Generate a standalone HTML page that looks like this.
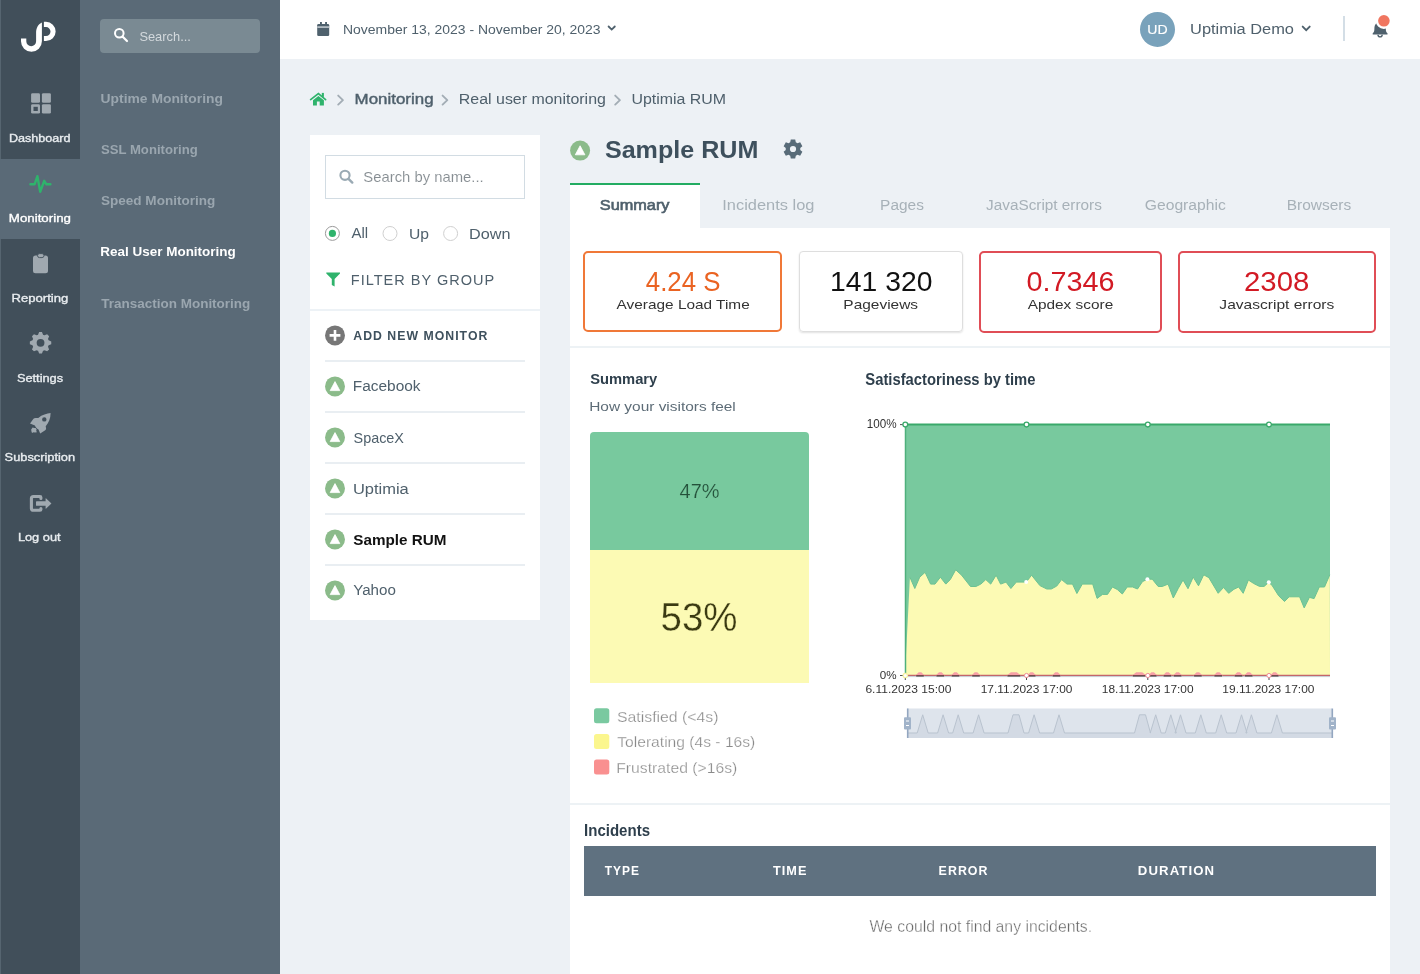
<!DOCTYPE html>
<html><head><meta charset="utf-8"><title>Uptimia RUM</title>
<style>
html,body{margin:0;padding:0;}
body{width:1420px;height:974px;overflow:hidden;position:relative;background:#edf1f5;font-family:"Liberation Sans",sans-serif;}
.a{position:absolute;}
svg{position:absolute;left:0;top:0;will-change:transform;}
text{font-family:"Liberation Sans",sans-serif;white-space:pre;}
</style></head><body>
<div class="a" style="left:0;top:0;width:80px;height:974px;background:#414f5a;"></div>
<div class="a" style="left:0;top:0;width:1px;height:974px;background:#566570;"></div>
<div class="a" style="left:0;top:159px;width:80px;height:80px;background:#5a6a77;"></div>
<div class="a" style="left:80px;top:0;width:200px;height:974px;background:#5a6a77;"></div>
<div class="a" style="left:100px;top:19px;width:160px;height:34px;background:#7a8a93;border-radius:4px;"></div>
<div class="a" style="left:280px;top:0;width:1140px;height:59px;background:#fff;"></div>
<div class="a" style="left:310px;top:135px;width:230px;height:485px;background:#fff;"></div>
<div class="a" style="left:325px;top:155px;width:198px;height:42px;border:1px solid #d2dce3;background:#fff;"></div>
<div class="a" style="left:310px;top:309px;width:230px;height:2px;background:#edf2f6;"></div>
<div class="a" style="left:325px;top:360px;width:200px;height:2px;background:#e9eef2;"></div>
<div class="a" style="left:325px;top:411px;width:200px;height:2px;background:#e9eef2;"></div>
<div class="a" style="left:325px;top:462px;width:200px;height:2px;background:#e9eef2;"></div>
<div class="a" style="left:325px;top:513px;width:200px;height:2px;background:#e9eef2;"></div>
<div class="a" style="left:325px;top:564px;width:200px;height:2px;background:#e9eef2;"></div>
<div class="a" style="left:570px;top:183px;width:130px;height:45px;background:#fff;border-top:2px solid #23ac62;box-sizing:border-box;"></div>
<div class="a" style="left:570px;top:228px;width:820px;height:746px;background:#fff;"></div>
<div class="a" style="left:583px;top:251px;width:199px;height:81px;border:2px solid #f07838;border-radius:5px;box-sizing:border-box;"></div>
<div class="a" style="left:799.3px;top:251.3px;width:163.5px;height:80.7px;border:1px solid #dedede;border-radius:4px;box-sizing:border-box;box-shadow:0 1px 2px rgba(0,0,0,0.12);"></div>
<div class="a" style="left:979px;top:251px;width:182.5px;height:81.5px;border:2px solid #e04d56;border-radius:5px;box-sizing:border-box;"></div>
<div class="a" style="left:1178px;top:251px;width:198px;height:81.5px;border:2px solid #e04d56;border-radius:5px;box-sizing:border-box;"></div>
<div class="a" style="left:570px;top:346px;width:820px;height:2px;background:#edf2f5;"></div>
<div class="a" style="left:590px;top:432px;width:218.5px;height:118px;background:#78c99e;border-radius:4px 4px 0 0;"></div>
<div class="a" style="left:590px;top:550px;width:218.5px;height:133px;background:#fcfab4;"></div>
<div class="a" style="left:570px;top:802.6px;width:820px;height:2px;background:#edf2f5;"></div>
<div class="a" style="left:584px;top:846px;width:792px;height:50px;background:#5f7180;"></div>
<svg width="1420" height="974" viewBox="0 0 1420 974">
<path d="M21,38.6 L26.3,38.6 L26.3,41.3 A4.9,4.9 0 0 0 36.1,41.3 L36.1,33 C36.1,28 38.5,24 41.9,22.6 L41.9,41.3 A10.45,10.45 0 0 1 21,41.3 Z" fill="#fff"/>
<path d="M43.9,21.8 L46,21.8 A9.65,9.65 0 0 1 46,41.1 L43.9,41.1 L43.9,36.1 L46,36.1 A4.5,4.5 0 0 0 46,27.1 L43.9,27.1 Z" fill="#fff"/>
<rect x="31.1" y="93.2" width="8.9" height="9.6" rx="1.4" fill="#a0a9b0"/><rect x="41.9" y="93.2" width="9" height="9.6" rx="1.4" fill="#a0a9b0"/>
<rect x="31.1" y="104.2" width="8.9" height="9.4" rx="1.4" fill="#a0a9b0"/><rect x="41.9" y="104.2" width="9" height="9.4" rx="1.4" fill="#a0a9b0"/>
<rect x="33.5" y="106.8" width="4.3" height="4.2" fill="#414f5a"/>
<polyline points="30.4,184.3 34.6,184.3 37.4,176.2 40.2,191.8 44.2,180.8 46.4,184.3 50.4,184.3" fill="none" stroke="#2fb36c" stroke-width="2.4" stroke-linejoin="round" stroke-linecap="round"/>
<rect x="33" y="255.5" width="15" height="17.7" rx="2.5" fill="#a0a9b0"/>
<rect x="37.5" y="253.6" width="6.5" height="4" rx="2" fill="#a0a9b0" stroke="#414f5a" stroke-width="0.9"/>
<path d="M38.05,334.78 L39.15,332.09 L41.95,332.09 L43.05,334.78 L43.41,334.90 L43.76,335.04 L44.11,335.19 L44.45,335.36 L47.13,334.24 L49.11,336.22 L47.99,338.90 L48.16,339.24 L48.31,339.59 L48.45,339.94 L48.57,340.30 L51.26,341.40 L51.26,344.20 L48.57,345.30 L48.45,345.66 L48.31,346.01 L48.16,346.36 L47.99,346.70 L49.11,349.38 L47.13,351.36 L44.45,350.24 L44.11,350.41 L43.76,350.56 L43.41,350.70 L43.05,350.82 L41.95,353.51 L39.15,353.51 L38.05,350.82 L37.69,350.70 L37.34,350.56 L36.99,350.41 L36.65,350.24 L33.97,351.36 L31.99,349.38 L33.11,346.70 L32.94,346.36 L32.79,346.01 L32.65,345.66 L32.53,345.30 L29.84,344.20 L29.84,341.40 L32.53,340.30 L32.65,339.94 L32.79,339.59 L32.94,339.24 L33.11,338.90 L31.99,336.22 L33.97,334.24 L36.65,335.36 L36.99,335.19 L37.34,335.04 L37.69,334.90 Z M44.45,342.80 A3.9,3.9 0 1 0 36.65,342.80 A3.9,3.9 0 1 0 44.45,342.80 Z" fill="#a0a9b0" fill-rule="evenodd"/>
<path d="M50.6,413.1 C47,413.4 42,415 38.3,417.9 L35.5,417.9 C34.6,418 34,418.3 33.5,418.8 L30,423.6 L34.9,425.6 C35.6,427.3 36.6,428.6 38.5,429.6 L40.2,433.6 L45.2,430.3 C45.8,429.8 46.1,429.2 46.1,428.4 L45.7,426.2 C48.6,423 50.6,419 50.6,413.1 Z M46.5,419.4 A2.2,2.2 0 1 0 42.1,419.4 A2.2,2.2 0 1 0 46.5,419.4 Z" fill="#a0a9b0" fill-rule="evenodd"/>
<path d="M32.6,427.4 L34.3,428 L35.6,427.9 L36.6,429.4 L36.2,430.8 L36.9,432.3 L35,432.6 L33.6,432.2 L32,433 L31.4,431.2 L31.2,429.6 Z" fill="#a0a9b0"/>
<path d="M40.9,498.4 L40.9,497.4 Q40.9,496.5 40,496.5 L33.5,496.5 Q31.4,496.5 31.4,498.6 L31.4,508.2 Q31.4,510.3 33.5,510.3 L40,510.3 Q40.9,510.3 40.9,509.4 L40.9,508.5" fill="none" stroke="#a0a9b0" stroke-width="3.1" stroke-linecap="round"/>
<path d="M36.6,501.3 L45.6,501.3 L45.6,498.6 Q45.7,498 46.2,498.4 L51.2,503.2 Q51.5,503.5 51.2,503.8 L46.2,508.6 Q45.7,509 45.6,508.4 L45.6,505.8 L36.6,505.8 Q36,505.8 36,505.2 L36,501.9 Q36,501.3 36.6,501.3 Z" fill="#a0a9b0"/>
<circle cx="119.3" cy="33.2" r="4.3" fill="none" stroke="#fff" stroke-width="2"/><line x1="122.5" y1="36.5" x2="127" y2="41" stroke="#fff" stroke-width="2.2" stroke-linecap="round"/>
<rect x="317.2" y="24" width="12" height="12" rx="1.3" fill="#4f616d"/>
<rect x="317.2" y="26.2" width="12" height="1.8" fill="#b3bcc3"/>
<rect x="320" y="22" width="1.9" height="3" fill="#4f616d"/><rect x="325.1" y="22" width="1.9" height="3" fill="#4f616d"/>
<polyline points="608.6,26.5 611.7,29.6 614.8,26.5" fill="none" stroke="#4f616d" stroke-width="1.8" stroke-linecap="round"/>
<circle cx="1157.5" cy="29.4" r="17.5" fill="#79a2bb"/>
<polyline points="1302.7,26.6 1306.2,30.1 1309.7,26.6" fill="none" stroke="#4f616d" stroke-width="1.9" stroke-linecap="round"/>
<line x1="1344" y1="16" x2="1344" y2="41" stroke="#c9d6e0" stroke-width="1.6"/>
<path d="M1372.7,34.6 L1387.5,34.6 L1387.5,33.2 C1386.2,32.4 1385.8,31 1385.8,28.5 C1385.8,24.5 1383.6,21.6 1380.1,21.4 C1376.6,21.6 1374.4,24.5 1374.4,28.5 C1374.4,31 1374,32.4 1372.7,33.2 Z" fill="#4f616d"/>
<path d="M1378,34.8 A2.1,2.1 0 0 0 1382.2,34.8" fill="none" stroke="#4f616d" stroke-width="1.4"/>
<circle cx="1383.9" cy="20.8" r="7" fill="#f07660" stroke="#fff" stroke-width="2.4"/>
<path d="M310.6,99.6 L318.4,93.5 L325.6,99.6" fill="none" stroke="#2fb36c" stroke-width="1.7" stroke-linecap="round" stroke-linejoin="miter"/>
<path d="M313,100.2 L318.4,95.9 L323.9,100.2 L323.9,105.4 L319.7,105.4 L319.7,101.6 L316.9,101.6 L316.9,105.4 L313,105.4 Z" fill="#2fb36c"/>
<rect x="321.8" y="92.9" width="2.1" height="4" fill="#2fb36c"/>
<polyline points="338.2,95.6 342.9,100.1 338.2,104.6" fill="none" stroke="#a3adb5" stroke-width="1.9" stroke-linecap="round" stroke-linejoin="round"/>
<polyline points="442.6,95.6 447.3,100.1 442.6,104.6" fill="none" stroke="#a3adb5" stroke-width="1.9" stroke-linecap="round" stroke-linejoin="round"/>
<polyline points="615.1999999999999,95.6 619.9,100.1 615.1999999999999,104.6" fill="none" stroke="#a3adb5" stroke-width="1.9" stroke-linecap="round" stroke-linejoin="round"/>
<circle cx="345" cy="175.3" r="4.6" fill="none" stroke="#9aaab4" stroke-width="2.1"/><line x1="348.5" y1="178.8" x2="352.3" y2="182.6" stroke="#9aaab4" stroke-width="2.4" stroke-linecap="round"/>
<circle cx="332.4" cy="233.4" r="7" fill="#fff" stroke="#9a9a9a" stroke-width="1"/><circle cx="332.4" cy="233.4" r="3.6" fill="#2fb36c"/>
<circle cx="390" cy="233.5" r="7" fill="#fff" stroke="#cfcfcf" stroke-width="1"/>
<circle cx="450.6" cy="233.5" r="7" fill="#fff" stroke="#cfcfcf" stroke-width="1"/>
<path d="M326.3,272.4 L340,272.4 L340,273.6 L334.6,279 L334.6,286.6 L331.8,285 L331.8,279 L326.3,273.6 Z" fill="#2fb36c"/>
<circle cx="335" cy="335.4" r="10" fill="#777777"/><path d="M335,330 L335,340.8 M329.6,335.4 L340.4,335.4" stroke="#fff" stroke-width="2.6"/>
<circle cx="335" cy="386.4" r="10" fill="#8bbb8a"/><path d="M330.2,390.59999999999997 L335,381.59999999999997 L339.8,390.59999999999997 Z" fill="#fff" stroke="#fff" stroke-width="0.8" stroke-linejoin="round"/>
<circle cx="335" cy="437.4" r="10" fill="#8bbb8a"/><path d="M330.2,441.59999999999997 L335,432.59999999999997 L339.8,441.59999999999997 Z" fill="#fff" stroke="#fff" stroke-width="0.8" stroke-linejoin="round"/>
<circle cx="335" cy="488.4" r="10" fill="#8bbb8a"/><path d="M330.2,492.59999999999997 L335,483.59999999999997 L339.8,492.59999999999997 Z" fill="#fff" stroke="#fff" stroke-width="0.8" stroke-linejoin="round"/>
<circle cx="335" cy="539.4" r="10" fill="#8bbb8a"/><path d="M330.2,543.6 L335,534.6 L339.8,543.6 Z" fill="#fff" stroke="#fff" stroke-width="0.8" stroke-linejoin="round"/>
<circle cx="335" cy="590.4" r="10" fill="#8bbb8a"/><path d="M330.2,594.6 L335,585.6 L339.8,594.6 Z" fill="#fff" stroke="#fff" stroke-width="0.8" stroke-linejoin="round"/>
<circle cx="580.1" cy="150.6" r="10" fill="#8bbb8a"/><path d="M575.3000000000001,154.79999999999998 L580.1,145.79999999999998 L584.9,154.79999999999998 Z" fill="#fff" stroke="#fff" stroke-width="0.8" stroke-linejoin="round"/>
<path d="M790.20,142.26 L790.80,139.45 L795.20,139.45 L795.80,142.26 L796.23,142.45 L796.65,142.68 L797.05,142.93 L797.44,143.20 L800.17,142.32 L802.37,146.13 L800.24,148.05 L800.28,148.53 L800.30,149.00 L800.28,149.47 L800.24,149.95 L802.37,151.87 L800.17,155.68 L797.44,154.80 L797.05,155.07 L796.65,155.32 L796.23,155.55 L795.80,155.74 L795.20,158.55 L790.80,158.55 L790.20,155.74 L789.77,155.55 L789.35,155.32 L788.95,155.07 L788.56,154.80 L785.83,155.68 L783.63,151.87 L785.76,149.95 L785.72,149.47 L785.70,149.00 L785.72,148.53 L785.76,148.05 L783.63,146.13 L785.83,142.32 L788.56,143.20 L788.95,142.93 L789.35,142.68 L789.77,142.45 Z M796.10,149.00 A3.1,3.1 0 1 0 789.90,149.00 A3.1,3.1 0 1 0 796.10,149.00 Z" fill="#586b78" fill-rule="evenodd"/>
<rect x="594" y="708.3" width="15.3" height="15" rx="2.5" fill="#7ac9a0"/>
<rect x="594" y="734" width="15.3" height="15" rx="2.5" fill="#fbf68e"/>
<rect x="594" y="759.5" width="15.3" height="15" rx="2.5" fill="#f99090"/>
<rect x="905" y="424.6" width="425" height="251" fill="#78c99e"/>
<polygon points="905,675.5 909.9,577.2 914.8,588.5 919.7,577.2 925.1,572.3 930.6,584.1 935,584.1 940.4,577.2 945.8,584.1 950.3,579.6 955.7,569.8 961.6,575.2 970.5,586.5 975.9,586.5 980.8,584.1 985.8,579.6 990.7,584.1 996.1,575.2 1000.6,584.1 1006,582.1 1010.9,588.5 1016.3,582.1 1026.2,582.1 1031.6,575.2 1039.9,585.6 1046.8,589 1051.3,589 1056.7,586.1 1061.6,579.6 1067,584.1 1072.5,584.1 1076.9,593.5 1082.3,584.1 1092.7,584.1 1097.1,598.4 1102.5,594.4 1107.5,594.4 1112.4,587 1117.3,589.5 1122.3,594 1127.2,587 1132.6,587 1137.5,589 1142.5,581.6 1147.4,579.2 1152.3,579.2 1158.2,586.5 1162.2,586.5 1168.1,584.1 1173.3,598 1178.1,588.7 1183,580 1188,588.7 1193.2,577.1 1198.5,585.8 1203.7,574.8 1208.9,577.7 1218.2,593.3 1223.5,587.5 1228.7,593.3 1233.9,589.3 1238.6,587 1243.2,593.3 1248.4,580 1253.7,583.5 1259.5,586.4 1264.1,586.4 1268.8,582.3 1272.3,585.8 1278.6,595.7 1284.5,601.5 1289.1,596.8 1299.6,596.8 1304.2,607.9 1309.4,597.4 1314.1,598.6 1319.3,587 1324.5,587 1329.8,574.8 1330,675.5" fill="#fcfab4"/>
<polyline points="909.9,577.2 914.8,588.5 919.7,577.2 925.1,572.3 930.6,584.1 935,584.1 940.4,577.2 945.8,584.1 950.3,579.6 955.7,569.8 961.6,575.2 970.5,586.5 975.9,586.5 980.8,584.1 985.8,579.6 990.7,584.1 996.1,575.2 1000.6,584.1 1006,582.1 1010.9,588.5 1016.3,582.1 1026.2,582.1 1031.6,575.2 1039.9,585.6 1046.8,589 1051.3,589 1056.7,586.1 1061.6,579.6 1067,584.1 1072.5,584.1 1076.9,593.5 1082.3,584.1 1092.7,584.1 1097.1,598.4 1102.5,594.4 1107.5,594.4 1112.4,587 1117.3,589.5 1122.3,594 1127.2,587 1132.6,587 1137.5,589 1142.5,581.6 1147.4,579.2 1152.3,579.2 1158.2,586.5 1162.2,586.5 1168.1,584.1 1173.3,598 1178.1,588.7 1183,580 1188,588.7 1193.2,577.1 1198.5,585.8 1203.7,574.8 1208.9,577.7 1218.2,593.3 1223.5,587.5 1228.7,593.3 1233.9,589.3 1238.6,587 1243.2,593.3 1248.4,580 1253.7,583.5 1259.5,586.4 1264.1,586.4 1268.8,582.3 1272.3,585.8 1278.6,595.7 1284.5,601.5 1289.1,596.8 1299.6,596.8 1304.2,607.9 1309.4,597.4 1314.1,598.6 1319.3,587 1324.5,587 1329.8,574.8" fill="none" stroke="#6cc293" stroke-width="1"/>
<line x1="904" y1="424.6" x2="1330" y2="424.6" stroke="#3aa96b" stroke-width="2"/>
<line x1="905.5" y1="424" x2="905.5" y2="676" stroke="#4fb07c" stroke-width="1.5"/>
<line x1="905" y1="676.6" x2="1330" y2="676.6" stroke="#c3cad2" stroke-width="1"/>
<line x1="905" y1="675.4" x2="1330" y2="675.4" stroke="#c4666b" stroke-width="1.3"/>
<path d="M915.4,675.6 L918.7,672.3 L921.3,672.3 L924.6,675.6 Z" fill="#f7a0a6"/>
<line x1="916.1999999999999" y1="675.9" x2="923.8000000000001" y2="675.9" stroke="#3a2a2a" stroke-width="1.1"/>
<path d="M935.6999999999999,675.6 L939.0,672.3 L941.5999999999999,672.3 L944.9,675.6 Z" fill="#f7a0a6"/>
<line x1="936.4999999999999" y1="675.9" x2="944.1" y2="675.9" stroke="#3a2a2a" stroke-width="1.1"/>
<path d="M950.9,675.6 L954.2,672.3 L956.8,672.3 L960.1,675.6 Z" fill="#f7a0a6"/>
<line x1="951.6999999999999" y1="675.9" x2="959.3000000000001" y2="675.9" stroke="#3a2a2a" stroke-width="1.1"/>
<path d="M971.4,675.6 L974.7,672.3 L977.3,672.3 L980.6,675.6 Z" fill="#f7a0a6"/>
<line x1="972.1999999999999" y1="675.9" x2="979.8000000000001" y2="675.9" stroke="#3a2a2a" stroke-width="1.1"/>
<path d="M1006.6999999999999,675.6 L1010.9,672.3 L1016.9,672.3 L1021.1,675.6 Z" fill="#f7a0a6"/>
<line x1="1007.4999999999999" y1="675.9" x2="1020.3000000000001" y2="675.9" stroke="#3a2a2a" stroke-width="1.1"/>
<path d="M1027.1000000000001,675.6 L1030.4,672.3 L1033.0,672.3 L1036.3,675.6 Z" fill="#f7a0a6"/>
<line x1="1027.9" y1="675.9" x2="1035.5" y2="675.9" stroke="#3a2a2a" stroke-width="1.1"/>
<path d="M1051.9,675.6 L1055.2,672.3 L1057.8,672.3 L1061.1,675.6 Z" fill="#f7a0a6"/>
<line x1="1052.7" y1="675.9" x2="1060.3" y2="675.9" stroke="#3a2a2a" stroke-width="1.1"/>
<path d="M1132.0,675.6 L1136.2,672.3 L1142.2,672.3 L1146.4,675.6 Z" fill="#f7a0a6"/>
<line x1="1132.8" y1="675.9" x2="1145.6000000000001" y2="675.9" stroke="#3a2a2a" stroke-width="1.1"/>
<path d="M1148.1000000000001,675.6 L1151.4,672.3 L1154.0,672.3 L1157.3,675.6 Z" fill="#f7a0a6"/>
<line x1="1148.9" y1="675.9" x2="1156.5" y2="675.9" stroke="#3a2a2a" stroke-width="1.1"/>
<path d="M1162.8000000000002,675.6 L1166.1000000000001,672.3 L1168.7,672.3 L1172.0,675.6 Z" fill="#f7a0a6"/>
<line x1="1163.6000000000001" y1="675.9" x2="1171.2" y2="675.9" stroke="#3a2a2a" stroke-width="1.1"/>
<path d="M1173.0,675.6 L1176.3,672.3 L1178.8999999999999,672.3 L1182.1999999999998,675.6 Z" fill="#f7a0a6"/>
<line x1="1173.8" y1="675.9" x2="1181.3999999999999" y2="675.9" stroke="#3a2a2a" stroke-width="1.1"/>
<path d="M1193.3000000000002,675.6 L1196.6000000000001,672.3 L1199.2,672.3 L1202.5,675.6 Z" fill="#f7a0a6"/>
<line x1="1194.1000000000001" y1="675.9" x2="1201.7" y2="675.9" stroke="#3a2a2a" stroke-width="1.1"/>
<path d="M1213.6000000000001,675.6 L1216.9,672.3 L1219.5,672.3 L1222.8,675.6 Z" fill="#f7a0a6"/>
<line x1="1214.4" y1="675.9" x2="1222.0" y2="675.9" stroke="#3a2a2a" stroke-width="1.1"/>
<path d="M1233.9,675.6 L1237.2,672.3 L1239.8,672.3 L1243.1,675.6 Z" fill="#f7a0a6"/>
<line x1="1234.7" y1="675.9" x2="1242.3" y2="675.9" stroke="#3a2a2a" stroke-width="1.1"/>
<path d="M1244.1000000000001,675.6 L1247.4,672.3 L1250.0,672.3 L1253.3,675.6 Z" fill="#f7a0a6"/>
<line x1="1244.9" y1="675.9" x2="1252.5" y2="675.9" stroke="#3a2a2a" stroke-width="1.1"/>
<path d="M1270.1000000000001,675.6 L1273.4,672.3 L1276.0,672.3 L1279.3,675.6 Z" fill="#f7a0a6"/>
<line x1="1270.9" y1="675.9" x2="1278.5" y2="675.9" stroke="#3a2a2a" stroke-width="1.1"/>
<line x1="905.3" y1="676" x2="905.3" y2="680" stroke="#444" stroke-width="1"/>
<line x1="1026.5" y1="676" x2="1026.5" y2="680" stroke="#444" stroke-width="1"/>
<line x1="1147.8" y1="676" x2="1147.8" y2="680" stroke="#444" stroke-width="1"/>
<line x1="1269" y1="676" x2="1269" y2="680" stroke="#444" stroke-width="1"/>
<line x1="900" y1="424.6" x2="904" y2="424.6" stroke="#555" stroke-width="1"/>
<line x1="900" y1="675.5" x2="904" y2="675.5" stroke="#555" stroke-width="1"/>
<circle cx="905.3" cy="424.6" r="2.4" fill="#fff" stroke="#3aa96b" stroke-width="1.3"/>
<circle cx="1026.5" cy="424.6" r="2.4" fill="#fff" stroke="#3aa96b" stroke-width="1.3"/>
<circle cx="1147.8" cy="424.6" r="2.4" fill="#fff" stroke="#3aa96b" stroke-width="1.3"/>
<circle cx="1269" cy="424.6" r="2.4" fill="#fff" stroke="#3aa96b" stroke-width="1.3"/>
<circle cx="1026.2" cy="582.1" r="2" fill="#fff"/>
<circle cx="1147.4" cy="579.2" r="2" fill="#fff"/>
<circle cx="1268.8" cy="582.3" r="2" fill="#fff"/>
<circle cx="1026.5" cy="675.5" r="2.1" fill="#fff" stroke="#ef8c94" stroke-width="1"/>
<circle cx="1147.8" cy="675.5" r="2.1" fill="#fff" stroke="#ef8c94" stroke-width="1"/>
<circle cx="1269" cy="675.5" r="2.1" fill="#fff" stroke="#ef8c94" stroke-width="1"/>
<circle cx="905.3" cy="675.5" r="2.2" fill="#fff" stroke="#f5f0a0" stroke-width="1.2"/>
<rect x="907" y="708.5" width="425" height="29.5" fill="#dee4ec"/>
<polygon points="908,738 908,733 917.2,733 922.7,714.8 928.2,733 937.6,733 943.1,714.8 948.6,733 952.7,733 958.2,714.8 963.7,733 973.1,733 978.6,714.8 984.1,733 1008,733 1013,714.8 1019,714.8 1024,733 1028.6,733 1034.1,714.8 1039.6,733 1053.5,733 1059,714.8 1064.5,733 1134.5,733 1139.5,714.8 1145.5,714.8 1150.5,733 1150.2,733 1155.7,714.8 1161.2,733 1165.3,733 1170.8,714.8 1176.3,733 1175.0,733 1180.5,714.8 1186.0,733 1195.3,733 1200.8,714.8 1206.3,733 1215.7,733 1221.2,714.8 1226.7,733 1236.0,733 1241.5,714.8 1247.0,733 1245.9,733 1251.4,714.8 1256.9,733 1271.4,733 1276.9,714.8 1282.4,733 1332,733 1332,738" fill="#d3dae4"/>
<polyline points="908,733 917.2,733 922.7,714.8 928.2,733 937.6,733 943.1,714.8 948.6,733 952.7,733 958.2,714.8 963.7,733 973.1,733 978.6,714.8 984.1,733 1008,733 1013,714.8 1019,714.8 1024,733 1028.6,733 1034.1,714.8 1039.6,733 1053.5,733 1059,714.8 1064.5,733 1134.5,733 1139.5,714.8 1145.5,714.8 1150.5,733 1150.2,733 1155.7,714.8 1161.2,733 1165.3,733 1170.8,714.8 1176.3,733 1175.0,733 1180.5,714.8 1186.0,733 1195.3,733 1200.8,714.8 1206.3,733 1215.7,733 1221.2,714.8 1226.7,733 1236.0,733 1241.5,714.8 1247.0,733 1245.9,733 1251.4,714.8 1256.9,733 1271.4,733 1276.9,714.8 1282.4,733 1332,733" fill="none" stroke="#b9c3cf" stroke-width="1"/>
<line x1="907.7" y1="708.5" x2="907.7" y2="738" stroke="#93a6c0" stroke-width="1.6"/>
<line x1="1332.3" y1="708.5" x2="1332.3" y2="738" stroke="#93a6c0" stroke-width="1.6"/>
<rect x="904" y="717.2" width="7" height="12.4" rx="1" fill="#a1b3c9"/>
<line x1="906" y1="721" x2="909" y2="721" stroke="#fff" stroke-width="1"/>
<line x1="906" y1="725.5" x2="909" y2="725.5" stroke="#fff" stroke-width="1"/>
<rect x="1329" y="717.2" width="7" height="12.4" rx="1" fill="#a1b3c9"/>
<line x1="1331" y1="721" x2="1334" y2="721" stroke="#fff" stroke-width="1"/>
<line x1="1331" y1="725.5" x2="1334" y2="725.5" stroke="#fff" stroke-width="1"/>
<text x="8.91" y="141.55" font-size="11.59" fill="#e9edf0" stroke="#e9edf0" stroke-width="0.35" textLength="61.69" lengthAdjust="spacingAndGlyphs">Dashboard</text>
<text x="8.86" y="221.75" font-size="11.31" fill="#ffffff" stroke="#ffffff" stroke-width="0.35" textLength="62.09" lengthAdjust="spacingAndGlyphs">Monitoring</text>
<text x="11.58" y="301.75" font-size="11.59" fill="#e9edf0" stroke="#e9edf0" stroke-width="0.35" textLength="56.76" lengthAdjust="spacingAndGlyphs">Reporting</text>
<text x="16.90" y="381.75" font-size="11.59" fill="#e9edf0" stroke="#e9edf0" stroke-width="0.35" textLength="46.20" lengthAdjust="spacingAndGlyphs">Settings</text>
<text x="4.60" y="460.55" font-size="11.59" fill="#e9edf0" stroke="#e9edf0" stroke-width="0.35" textLength="70.52" lengthAdjust="spacingAndGlyphs">Subscription</text>
<text x="17.90" y="540.55" font-size="11.59" fill="#e9edf0" stroke="#e9edf0" stroke-width="0.35" textLength="42.66" lengthAdjust="spacingAndGlyphs">Log out</text>
<text x="139.40" y="40.75" font-size="13.44" fill="#d3d9dd" textLength="51.46" lengthAdjust="spacingAndGlyphs">Search...</text>
<text x="100.55" y="102.95" font-size="12.30" font-weight="bold" fill="#9aa6af" textLength="122.44" lengthAdjust="spacingAndGlyphs">Uptime Monitoring</text>
<text x="101.00" y="154.15" font-size="12.73" font-weight="bold" fill="#9aa6af" textLength="96.74" lengthAdjust="spacingAndGlyphs">SSL Monitoring</text>
<text x="100.99" y="205.25" font-size="13.30" font-weight="bold" fill="#9aa6af" textLength="114.28" lengthAdjust="spacingAndGlyphs">Speed Monitoring</text>
<text x="100.36" y="255.95" font-size="12.73" font-weight="bold" fill="#ffffff" textLength="135.40" lengthAdjust="spacingAndGlyphs">Real User Monitoring</text>
<text x="101.20" y="307.55" font-size="13.58" font-weight="bold" fill="#9aa6af" textLength="149.16" lengthAdjust="spacingAndGlyphs">Transaction Monitoring</text>
<text x="343.01" y="34.45" font-size="13.16" fill="#4f606c" textLength="257.56" lengthAdjust="spacingAndGlyphs">November 13, 2023 - November 20, 2023</text>
<text x="1147.22" y="33.85" font-size="13.44" fill="#ffffff" stroke="#ffffff" stroke-width="0.15" textLength="20.37" lengthAdjust="spacingAndGlyphs">UD</text>
<text x="1190.08" y="33.95" font-size="14.58" fill="#4f606c" textLength="103.89" lengthAdjust="spacingAndGlyphs">Uptimia Demo</text>
<text x="354.58" y="104.45" font-size="14.44" fill="#4f606c" stroke="#4f606c" stroke-width="0.40" textLength="78.97" lengthAdjust="spacingAndGlyphs">Monitoring</text>
<text x="458.85" y="104.45" font-size="14.44" fill="#4f606c" textLength="147.04" lengthAdjust="spacingAndGlyphs">Real user monitoring</text>
<text x="631.40" y="104.45" font-size="14.44" fill="#4f606c" textLength="94.67" lengthAdjust="spacingAndGlyphs">Uptimia RUM</text>
<text x="363.34" y="182.05" font-size="13.73" fill="#858c91" stroke="#ffffff" stroke-width="0.10" textLength="120.40" lengthAdjust="spacingAndGlyphs">Search by name...</text>
<text x="351.40" y="238.35" font-size="14.44" fill="#4f606c" textLength="16.69" lengthAdjust="spacingAndGlyphs">All</text>
<text x="409.02" y="238.65" font-size="14.58" fill="#4f606c" textLength="20.01" lengthAdjust="spacingAndGlyphs">Up</text>
<text x="469.13" y="238.65" font-size="14.58" fill="#4f606c" textLength="41.48" lengthAdjust="spacingAndGlyphs">Down</text>
<text x="350.77" y="285.25" font-size="14.44" fill="#4f606c" textLength="144.55" lengthAdjust="spacingAndGlyphs" letter-spacing="1.00">FILTER BY GROUP</text>
<text x="353.31" y="339.95" font-size="12.02" font-weight="bold" fill="#3e505d" textLength="135.05" lengthAdjust="spacingAndGlyphs" letter-spacing="1.00">ADD NEW MONITOR</text>
<text x="352.79" y="391.45" font-size="14.01" fill="#4f606c" textLength="67.76" lengthAdjust="spacingAndGlyphs">Facebook</text>
<text x="353.55" y="442.65" font-size="14.30" fill="#4f606c" textLength="50.40" lengthAdjust="spacingAndGlyphs">SpaceX</text>
<text x="352.97" y="493.55" font-size="14.15" fill="#4f606c" textLength="55.82" lengthAdjust="spacingAndGlyphs">Uptimia</text>
<text x="353.26" y="544.75" font-size="14.15" font-weight="bold" fill="#111111" textLength="93.23" lengthAdjust="spacingAndGlyphs">Sample RUM</text>
<text x="353.16" y="595.45" font-size="14.01" fill="#4f606c" textLength="42.65" lengthAdjust="spacingAndGlyphs">Yahoo</text>
<text x="604.91" y="158.25" font-size="23.40" font-weight="bold" fill="#3e505d" textLength="153.39" lengthAdjust="spacingAndGlyphs">Sample RUM</text>
<text x="599.79" y="209.85" font-size="14.01" fill="#4f606c" stroke="#4f606c" stroke-width="0.60" textLength="69.71" lengthAdjust="spacingAndGlyphs">Summary</text>
<text x="722.32" y="209.85" font-size="14.01" fill="#a7b1b8" textLength="92.10" lengthAdjust="spacingAndGlyphs">Incidents log</text>
<text x="880.09" y="209.85" font-size="14.01" fill="#a7b1b8" textLength="43.79" lengthAdjust="spacingAndGlyphs">Pages</text>
<text x="986.06" y="209.85" font-size="14.01" fill="#a7b1b8" textLength="115.82" lengthAdjust="spacingAndGlyphs">JavaScript errors</text>
<text x="1144.76" y="209.85" font-size="14.01" fill="#a7b1b8" textLength="81.08" lengthAdjust="spacingAndGlyphs">Geographic</text>
<text x="1286.79" y="209.85" font-size="14.01" fill="#a7b1b8" textLength="64.49" lengthAdjust="spacingAndGlyphs">Browsers</text>
<text x="645.80" y="290.75" font-size="27.24" fill="#ea6322" textLength="74.69" lengthAdjust="spacingAndGlyphs">4.24 S</text>
<text x="616.60" y="309.05" font-size="12.87" fill="#333333" textLength="133.12" lengthAdjust="spacingAndGlyphs">Average Load Time</text>
<text x="830.13" y="290.75" font-size="27.24" fill="#111111" textLength="102.27" lengthAdjust="spacingAndGlyphs">141 320</text>
<text x="843.39" y="309.05" font-size="12.87" fill="#333333" textLength="74.69" lengthAdjust="spacingAndGlyphs">Pageviews</text>
<text x="1026.50" y="290.75" font-size="27.24" fill="#d21a24" textLength="88.07" lengthAdjust="spacingAndGlyphs">0.7346</text>
<text x="1027.70" y="309.05" font-size="12.87" fill="#333333" textLength="85.52" lengthAdjust="spacingAndGlyphs">Apdex score</text>
<text x="1244.02" y="290.75" font-size="27.24" fill="#d21a24" textLength="65.26" lengthAdjust="spacingAndGlyphs">2308</text>
<text x="1219.36" y="309.05" font-size="12.87" fill="#333333" textLength="114.93" lengthAdjust="spacingAndGlyphs">Javascript errors</text>
<text x="590.17" y="384.45" font-size="14.44" font-weight="bold" fill="#2e3f4c" textLength="67.14" lengthAdjust="spacingAndGlyphs">Summary</text>
<text x="589.19" y="411.05" font-size="13.30" fill="#5d6c77" textLength="146.62" lengthAdjust="spacingAndGlyphs">How your visitors feel</text>
<text x="679.59" y="497.65" font-size="19.42" fill="#24503a" stroke="#78c99e" stroke-width="0.20" textLength="39.91" lengthAdjust="spacingAndGlyphs">47%</text>
<text x="660.50" y="630.65" font-size="41.32" fill="#3b3a12" stroke="#fcfab4" stroke-width="0.35" textLength="76.95" lengthAdjust="spacingAndGlyphs">53%</text>
<text x="617.01" y="721.85" font-size="14.30" fill="#8a8a8a" stroke="#ffffff" stroke-width="0.25" textLength="101.51" lengthAdjust="spacingAndGlyphs">Satisfied (&lt;4s)</text>
<text x="617.26" y="747.25" font-size="14.30" fill="#8a8a8a" stroke="#ffffff" stroke-width="0.25" textLength="138.05" lengthAdjust="spacingAndGlyphs">Tolerating (4s - 16s)</text>
<text x="616.27" y="772.65" font-size="14.30" fill="#8a8a8a" stroke="#ffffff" stroke-width="0.25" textLength="121.04" lengthAdjust="spacingAndGlyphs">Frustrated (&gt;16s)</text>
<text x="865.37" y="384.65" font-size="15.58" font-weight="bold" fill="#2e3f4c" textLength="170.10" lengthAdjust="spacingAndGlyphs">Satisfactoriness by time</text>
<text x="866.87" y="428.35" font-size="12.59" fill="#333333" textLength="29.88" lengthAdjust="spacingAndGlyphs">100%</text>
<text x="879.74" y="679.15" font-size="11.59" fill="#333333" textLength="16.81" lengthAdjust="spacingAndGlyphs">0%</text>
<text x="865.44" y="693.25" font-size="11.74" fill="#333333" textLength="85.96" lengthAdjust="spacingAndGlyphs">6.11.2023 15:00</text>
<text x="980.66" y="693.25" font-size="11.74" fill="#333333" textLength="91.74" lengthAdjust="spacingAndGlyphs">17.11.2023 17:00</text>
<text x="1101.86" y="693.25" font-size="11.74" fill="#333333" textLength="91.74" lengthAdjust="spacingAndGlyphs">18.11.2023 17:00</text>
<text x="1222.35" y="693.25" font-size="11.74" fill="#333333" textLength="92.14" lengthAdjust="spacingAndGlyphs">19.11.2023 17:00</text>
<text x="584.06" y="835.65" font-size="15.72" font-weight="bold" fill="#2e3f4c" textLength="65.95" lengthAdjust="spacingAndGlyphs">Incidents</text>
<text x="604.80" y="875.15" font-size="12.30" font-weight="bold" fill="#ffffff" textLength="35.09" lengthAdjust="spacingAndGlyphs" letter-spacing="1.00">TYPE</text>
<text x="773.00" y="875.15" font-size="12.30" font-weight="bold" fill="#ffffff" textLength="34.47" lengthAdjust="spacingAndGlyphs" letter-spacing="1.00">TIME</text>
<text x="938.62" y="875.15" font-size="12.30" font-weight="bold" fill="#ffffff" textLength="49.92" lengthAdjust="spacingAndGlyphs" letter-spacing="1.00">ERROR</text>
<text x="1137.87" y="875.15" font-size="12.30" font-weight="bold" fill="#ffffff" textLength="77.27" lengthAdjust="spacingAndGlyphs" letter-spacing="1.00">DURATION</text>
<text x="869.50" y="931.85" font-size="15.58" fill="#666666" stroke="#ffffff" stroke-width="0.35" textLength="222.63" lengthAdjust="spacingAndGlyphs">We could not find any incidents.</text>
</svg>
</body></html>
